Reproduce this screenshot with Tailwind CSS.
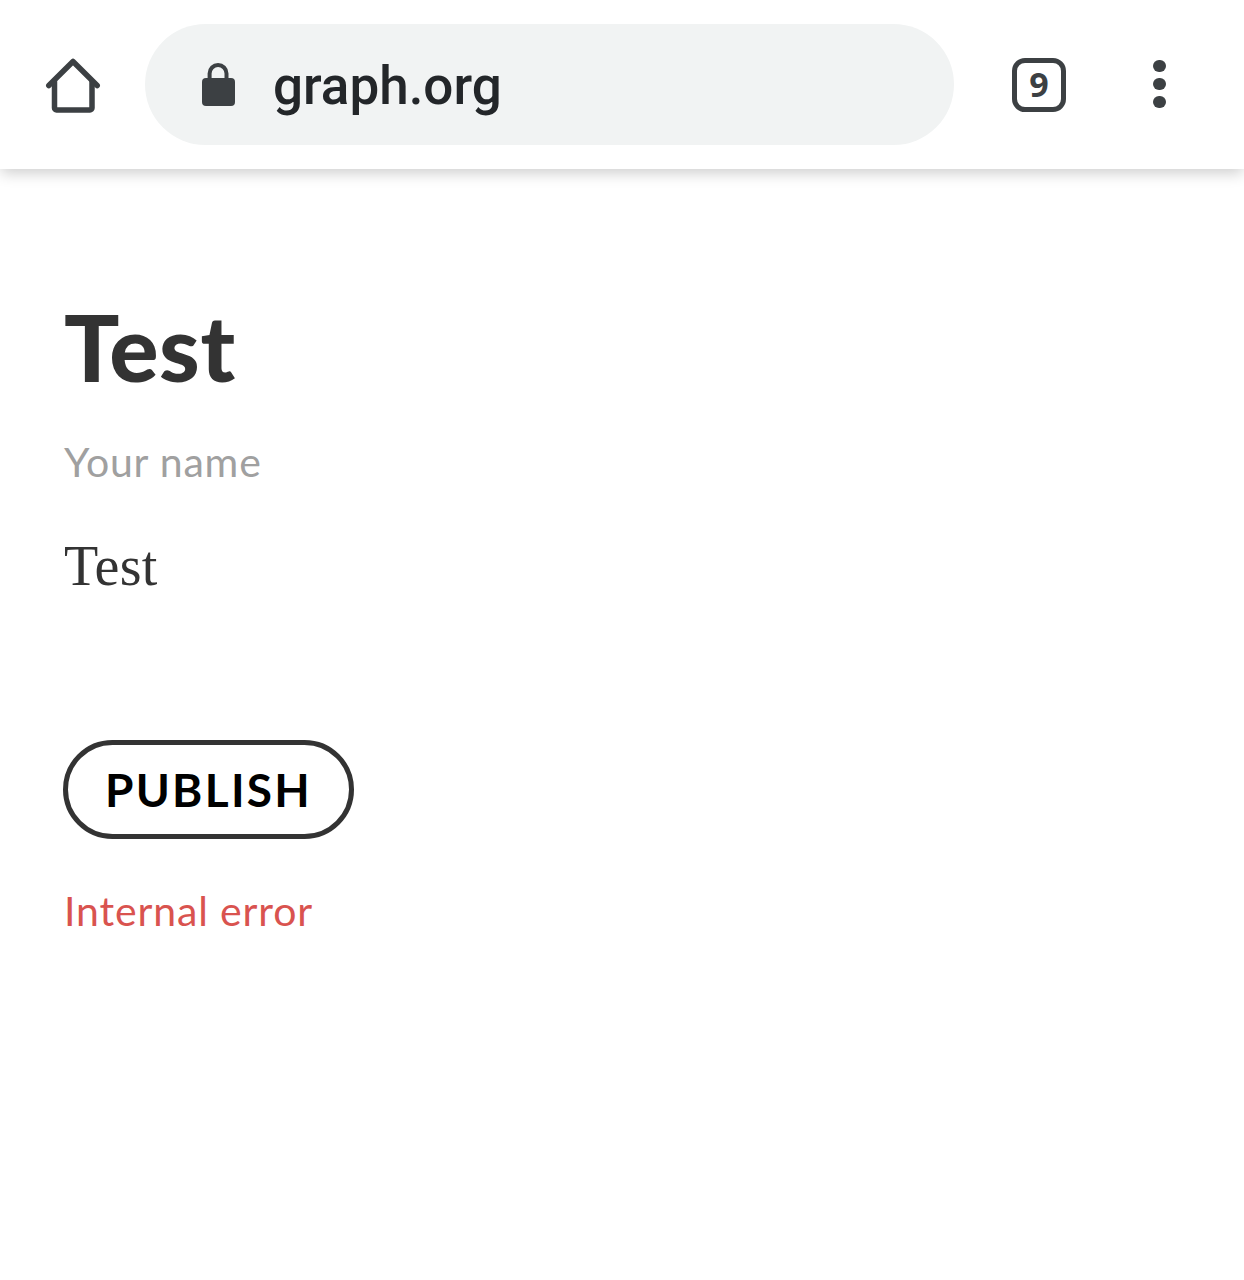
<!DOCTYPE html>
<html><head><script src="https://cdn.jsdelivr.net/npm/@tailwindcss/browser@4"></script></head>
<body class="bg-white">
<div class="h-[1280px] w-[1244px] overflow-hidden bg-white">
<header class="relative flex h-[169px] items-center bg-white shadow-[0_5px_14px_-1px_rgba(0,0,0,0.2)]">
<div class="ml-[44px] flex w-[58px] justify-center">
<svg width="58" height="60" viewBox="0 0 58 60" fill="none" stroke="#3c4043" stroke-width="5.5" stroke-linejoin="round" stroke-linecap="round"><path d="M4.800 30.500 L29 6.500 L53.200 30.500"/><path d="M10.500 27 V53 a2 2 0 0 0 2 2 H46 a2 2 0 0 0 2 -2 V27" /></svg>
</div>
<div class="-mt-[1px] ml-[43px] flex h-[121px] w-[809px] items-center rounded-full bg-[#f1f3f3]">
<svg class="ml-[57px]" width="34" height="46" viewBox="0 0 34 46"><path fill="none" stroke="#3c4043" stroke-width="4" d="M7.600 20 V12.500 a8.450 8.450 0 0 1 16.900 0 V20"/><rect x="0" y="17" width="33" height="28" rx="4" fill="#3c4043"/></svg>
<span class="ml-[37px] mt-1 font-['Roboto',sans-serif] text-[53px] font-medium leading-none text-[#232629]">graph.org</span>
</div>
<div class="ml-[58px] flex h-[54px] w-[54px] items-center justify-center rounded-[13px] border-[5.5px] border-[#3c4043] font-['Open_Sans',sans-serif] text-[34px] font-bold text-[#3c4043]">9</div>
<div class="ml-[87px] -mt-[1px] flex flex-col gap-[5.5px]">
<div class="size-[12.500px] rounded-full bg-[#3c4043]"></div>
<div class="size-[12.500px] rounded-full bg-[#3c4043]"></div>
<div class="size-[12.500px] rounded-full bg-[#3c4043]"></div>
</div>
</header>
<main class="pl-[64px]">
<h1 class="mt-[128px] font-['Lato',sans-serif] text-[92px] font-black leading-[100px] tracking-[0.6px] text-[#333]">Test</h1>
<p class="mt-[40px] font-['Lato',sans-serif] text-[41px] leading-[50px] tracking-[0.8px] text-[#a0a0a0]">Your name</p>
<p class="mt-[49px] font-['Liberation_Serif',serif] text-[56px] leading-[60px] tracking-[0.3px] text-[#333]">Test</p>
<button class="mt-[144px] -ml-px flex h-[99px] w-[291px] items-center justify-center rounded-full border-[5px] border-[#333] font-['Lato',sans-serif] text-[46px] font-bold tracking-[2.300px] text-black">PUBLISH</button>
<p class="mt-[47px] font-['Lato',sans-serif] text-[41px] leading-[50px] tracking-[0.85px] text-[#d9534f]">Internal error</p>
</main>
</div>
</body></html>
